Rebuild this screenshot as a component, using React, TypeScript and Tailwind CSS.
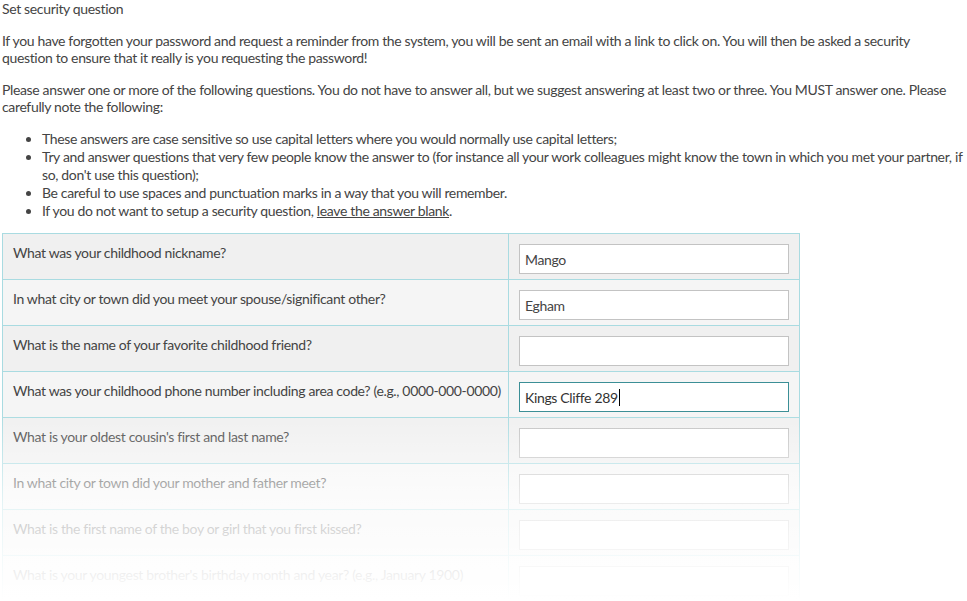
const rows = [
  { q: "What was your childhood nickname?", a: "Mango" },
  { q: "In what city or town did you meet your spouse/significant other?", a: "Egham" },
  { q: "What is the name of your favorite childhood friend?", a: "" },
  { q: "What was your childhood phone number including area code? (e.g., 0000-000-0000)", a: "Kings Cliffe 289", focused: true },
  { q: "What is your oldest cousin's first and last name?", a: "" },
  { q: "In what city or town did your mother and father meet?", a: "" },
  { q: "What is the first name of the boy or girl that you first kissed?", a: "" },
  { q: "What is your youngest brother's birthday month and year? (e.g., January 1900)", a: "" },
]

const App = () => {
  return (
    <div className="relative h-[601px] w-full overflow-hidden bg-white px-[2px] text-[14px] leading-[17px] tracking-[-0.35px] text-[#444]" style={{ fontFamily: "Lato, 'Liberation Sans', sans-serif" }}>
      <p>Set security question</p>
      <p className="mt-[15px] pr-[40px]">
        If you have forgotten your password and request a reminder from the system, you will be sent an email with a link to click on. You will then be asked a security question to ensure that it really is you requesting the password!
      </p>
      <p className="mt-[15px]">
        Please answer one or more of the following questions. You do not have to answer all, but we suggest answering at least two or three. You MUST answer one. Please carefully note the following:
      </p>
      <ul className="mt-[15px] list-disc pl-[40px] leading-[18px]">
        <li>These answers are case sensitive so use capital letters where you would normally use capital letters;</li>
        <li>Try and answer questions that very few people know the answer to (for instance all your work colleagues might know the town in which you met your partner, if so, don't use this question);</li>
        <li>Be careful to use spaces and punctuation marks in a way that you will remember.</li>
        <li>
          If you do not want to setup a security question, <span className="underline">leave the answer blank</span>.
        </li>
      </ul>

      <table className="mt-[13px] w-[797px] table-fixed border-collapse">
        <colgroup>
          <col className="w-[506px]" />
          <col className="w-[291px]" />
        </colgroup>
        <tbody>
          {rows.map((r, i) => (
            <tr key={i} className={i % 2 === 0 ? "bg-[#f0f0f0]" : "bg-[#f5f5f5]"}>
              <td className="h-[46px] overflow-visible whitespace-nowrap border border-[#a9dbe1] px-[10px] pt-[10px] align-top">{r.q}</td>
              <td className="border border-[#a9dbe1] px-[10px] pt-[10px] align-top">
                {r.focused ? (
                  <div className="flex h-[30px] w-[270px] items-center border border-[#3b8f96] bg-white px-[5px] text-[#333]">
                    {r.a}
                    <span className="ml-[1px] inline-block h-[17px] w-[1px] bg-black" />
                  </div>
                ) : (
                  <input
                    readOnly
                    defaultValue={r.a}
                    className="block h-[30px] w-[270px] border border-[#c3c3c3] bg-white px-[5px] text-[#444] outline-none"
                  />
                )}
              </td>
            </tr>
          ))}
        </tbody>
      </table>

      {/* fade out */}
      <div className="pointer-events-none absolute bottom-0 left-0 h-[190px] w-full bg-gradient-to-b from-white/0 via-white/70 to-white" />
    </div>
  )
}

export default App
